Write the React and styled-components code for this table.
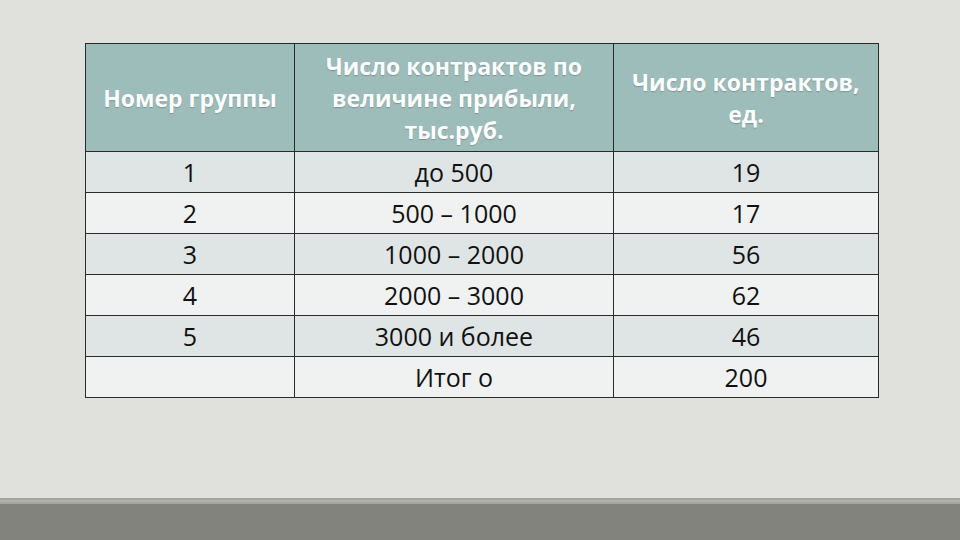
import styled, {createGlobalStyle} from 'styled-components'

const Global = createGlobalStyle`
    html, body {
        margin:0;
        padding:0;
        background:#e0e0dc;
    }
`;

const Slide = styled.div`
    width:960px;
    height:540px;
    display:flex;
    flex-direction:column;
    background:#e0e0dc;
    font-family:"Open Sans", "Noto Sans", sans-serif;
    overflow:hidden;
`;

const Content = styled.div`
    flex:1;
    padding:43px 0 0 85px;
`;

const Table = styled.table`
    border-collapse:collapse;
    width:794px;
    table-layout:fixed;
    border:1px solid #2a2a2a;
`;

const HeadCell = styled.th`
    background:#9dbdba;
    color:#ffffff;
    font-weight:700;
    font-size:23px;
    line-height:32px;
    height:107px;
    padding:0 6px;
    text-align:center;
    vertical-align:middle;
    border:1px solid #2a2a2a;
    text-shadow:0 1px 1px rgba(60,80,80,0.35);
`;

const Cell = styled.td`
    background:${p => p.$odd ? '#dfe5e5' : '#eff2f0'};
    color:#111;
    font-size:25px;
    height:40px;
    line-height:30px;
    padding:0;
    text-align:center;
    vertical-align:middle;
    border-left:1px solid #2a2a2a;
    border-right:1px solid #2a2a2a;
    border-top:1px solid #2a2a2a;
`;

const Footer = styled.div`
    height:42px;
    display:flex;
    flex-direction:column;
`;

const Stripe = styled.div`
    height:6px;
    background:linear-gradient(#a3a39e 0 2px, #b2b2ac 2px 4px, #a6a6a0 4px 6px);
`;

const Bar = styled.div`
    flex:1;
    background:#82837d;
`;

const rows = [
    ['1', 'до 500', '19'],
    ['2', '500 – 1000', '17'],
    ['3', '1000 – 2000', '56'],
    ['4', '2000 – 3000', '62'],
    ['5', '3000 и более', '46'],
    ['', 'Итог о', '200'],
]

export default function App() {
    return (
        <Slide>
            <Global />
            <Content>
                <Table>
                    <colgroup>
                        <col style={{width:'209px'}} />
                        <col style={{width:'319px'}} />
                        <col style={{width:'265px'}} />
                    </colgroup>
                    <thead>
                        <tr>
                            <HeadCell>Номер группы</HeadCell>
                            <HeadCell>Число контрактов по<br />величине прибыли,<br />тыс.руб.</HeadCell>
                            <HeadCell>Число контрактов,<br />ед.</HeadCell>
                        </tr>
                    </thead>
                    <tbody>
                        {rows.map((r, i) => (
                            <tr key={i}>
                                {r.map((v, j) => (
                                    <Cell key={j} $odd={i % 2 === 0}>{v}</Cell>
                                ))}
                            </tr>
                        ))}
                    </tbody>
                </Table>
            </Content>
            <Footer>
                <Stripe />
                <Bar />
            </Footer>
        </Slide>
    )
}
